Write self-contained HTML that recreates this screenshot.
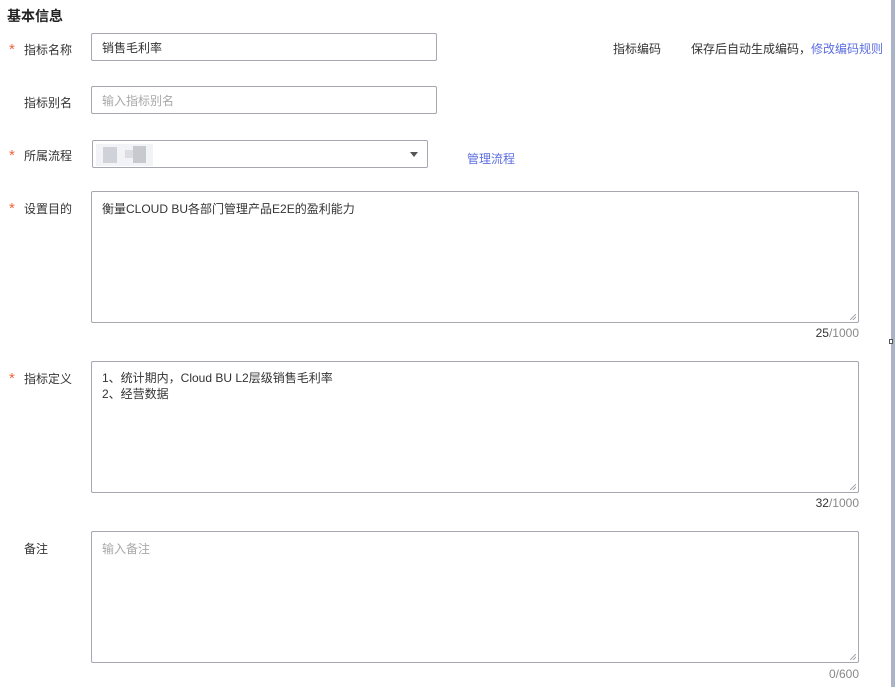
<!DOCTYPE html>
<html><head><meta charset="utf-8"><style>
body{margin:0;width:895px;height:687px;background:#fff;position:relative;overflow:hidden;font-family:"Liberation Sans","Noto Sans CJK SC",sans-serif;font-size:12px;color:#333}
.a{position:absolute}
.lbl{position:absolute;left:24px;font-size:12px;color:#333}
.star{position:absolute;left:9px;color:#f0653d;font-size:15px;line-height:15px}
.box{position:absolute;border:1px solid #a5a8b0;border-radius:2px;box-sizing:border-box;background:#fff}
.t{position:absolute;left:10px;font-size:12px}
.ph{color:#a8a8a8}
.cnt{position:absolute;right:36px;font-size:12px;color:#888}
.cnt b{font-weight:normal;color:#333}
.grip{position:absolute;right:2px;bottom:2px;width:6px;height:6px;background:linear-gradient(135deg,transparent 45%,#aaa 45%,#aaa 55%,transparent 55%,transparent 70%,#aaa 70%,#aaa 80%,transparent 80%)}
</style></head><body>
<div class="a" style="left:7px;top:6px;font-size:14px;font-weight:bold;color:#222">基本信息</div>

<span class="star" style="top:42px">*</span><div class="lbl" style="top:41px">指标名称</div>
<div class="box" style="left:91px;top:33px;width:346px;height:28px"><span class="t" style="top:5px">销售毛利率</span></div>
<div class="a" style="left:613px;top:40px;color:#333">指标编码</div>
<div class="a" style="left:691px;top:40px;color:#333">保存后自动生成编码，<span style="color:#5c6ee0">修改编码规则</span></div>

<div class="lbl" style="top:94px">指标别名</div>
<div class="box" style="left:91px;top:86px;width:346px;height:28px"><span class="t ph" style="top:5px">输入指标别名</span></div>

<span class="star" style="top:148px">*</span><div class="lbl" style="top:147px">所属流程</div>
<div class="box" style="left:92px;top:140px;width:336px;height:28px">
<div class="a" style="left:3px;top:3px;width:57px;height:22px;background:#f2f3f7"></div>
<div class="a" style="left:10px;top:6px;width:14px;height:16px;background:#cfd2d8"></div>
<div class="a" style="left:32px;top:9px;width:8px;height:8px;background:#dcdde2"></div>
<div class="a" style="left:40px;top:5px;width:13px;height:17px;background:#c7c9cf"></div>
<div class="a" style="right:9px;top:11px;width:0;height:0;border-left:4px solid transparent;border-right:4px solid transparent;border-top:5px solid #555"></div>
</div>
<div class="a" style="left:467px;top:150px;color:#5c6ee0">管理流程</div>

<span class="star" style="top:201px">*</span><div class="lbl" style="top:200px">设置目的</div>
<div class="box" style="left:91px;top:191px;width:768px;height:132px"><span class="t" style="top:8px">衡量CLOUD BU各部门管理产品E2E的盈利能力</span><div class="grip"></div></div>
<div class="cnt" style="top:326px"><b>25</b>/1000</div>

<span class="star" style="top:371px">*</span><div class="lbl" style="top:370px">指标定义</div>
<div class="box" style="left:91px;top:361px;width:768px;height:132px"><span class="t" style="top:8px;line-height:16px">1、统计期内，Cloud BU L2层级销售毛利率<br>2、经营数据</span><div class="grip"></div></div>
<div class="cnt" style="top:496px"><b>32</b>/1000</div>

<div class="lbl" style="top:540px">备注</div>
<div class="box" style="left:91px;top:531px;width:768px;height:132px"><span class="t ph" style="top:8px">输入备注</span><div class="grip"></div></div>
<div class="cnt" style="top:667px">0/600</div>

<div class="a" style="left:891px;top:0;width:4px;height:687px;background:#aab3c8"></div>
<div class="a" style="left:889px;top:339px;width:4px;height:5px;border:1px solid #555;background:#fff;box-sizing:border-box"></div>
</body></html>
